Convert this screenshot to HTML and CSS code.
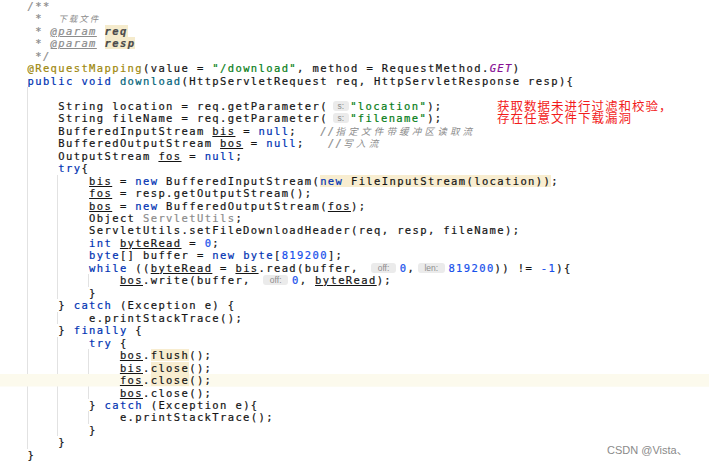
FILE: index.html
```html
<!DOCTYPE html>
<html lang="zh">
<head>
<meta charset="utf-8">
<title>download</title>
<link rel="stylesheet" href="styles.css">
</head>
<body>
<div class="page">
  <div class="editor">
    <div class="line c">/**</div>
    <div class="line c"> *  <span class="cjk-doc">下载文件</span></div>
    <div class="line c"> * <span class="dt">@param</span> <span class="dp">req</span></div>
    <div class="line c"> * <span class="dt">@param</span> <span class="dp">resp</span></div>
    <div class="line c"> */</div>
    <div class="line"><span class="a">@RequestMapping</span>(value = <span class="s">"/download"</span>, method = RequestMethod.<span class="sf">GET</span>)</div>
    <div class="line"><span class="k">public void</span> <span class="m">download</span>(HttpServletRequest req, HttpServletResponse resp){</div>
    <div class="blk">
      <div class="line"></div>
      <div class="line">String location = req.getParameter(<span class="h h-s">s:</span><span class="s">"location"</span>);</div>
      <div class="line">String fileName = req.getParameter(<span class="h h-s">s:</span><span class="s">"filename"</span>);</div>
      <div class="line">BufferedInputStream <span class="v">bis</span> = <span class="k">null</span>;   <span class="c">//<span class="cjk">指定文件带缓冲区读取流</span></span></div>
      <div class="line">BufferedOutputStream <span class="v">bos</span> = <span class="k">null</span>;   <span class="c">//<span class="cjk">写入流</span></span></div>
      <div class="line">OutputStream <span class="v">fos</span> = <span class="k">null</span>;</div>
      <div class="line"><span class="k">try</span>{</div>
      <div class="blk">
        <div class="line"><span class="v">bis</span> = <span class="k">new</span> BufferedInputStream(<span class="hl"><span class="k">new</span> FileInputStream(location))</span>;</div>
        <div class="line"><span class="v">fos</span> = resp.getOutputStream();</div>
        <div class="line"><span class="v">bos</span> = <span class="k">new</span> BufferedOutputStream(<span class="v">fos</span>);</div>
        <div class="line">Object <span class="u">ServletUtils</span>;</div>
        <div class="line">ServletUtils.setFileDownloadHeader(req, resp, fileName);</div>
        <div class="line"><span class="k">int</span> <span class="v">byteRead</span> = <span class="n">0</span>;</div>
        <div class="line"><span class="k">byte</span>[] buffer = <span class="k">new byte</span>[<span class="n">819200</span>];</div>
        <div class="line"><span class="k">while</span> ((<span class="v">byteRead</span> = <span class="v">bis</span>.read(buffer, <span class="h h-off">off:</span><span class="n">0</span>, <span class="h h-len">len:</span><span class="n">819200</span>)) != <span class="n">-1</span>){</div>
        <div class="blk">
          <div class="line"><span class="v">bos</span>.write(buffer, <span class="h h-off">off:</span><span class="n">0</span>, <span class="v">byteRead</span>);</div>
        </div>
        <div class="line">}</div>
      </div>
      <div class="line">} <span class="k">catch</span> (Exception e) {</div>
      <div class="blk">
        <div class="line">e.printStackTrace();</div>
      </div>
      <div class="line">} <span class="k">finally</span> {</div>
      <div class="blk">
        <div class="line"><span class="k">try</span> {</div>
        <div class="blk">
          <div class="line"><span class="v">bos</span>.<span class="hl">flush</span>();</div>
          <div class="line"><span class="v">bis</span>.<span class="hl">close</span>();</div>
          <div class="line cur"><span class="v">fos</span>.<span class="hl">close</span>();</div>
          <div class="line"><span class="v">bos</span>.close();</div>
        </div>
        <div class="line">} <span class="k">catch</span> (Exception e){</div>
        <div class="blk">
          <div class="line">e.printStackTrace();</div>
        </div>
        <div class="line">}</div>
      </div>
      <div class="line">}</div>
    </div>
    <div class="line">}</div>
  </div>

  <div class="note">获取数据未进行过滤和校验，<br>存在任意文件下载漏洞</div>

  <div class="mark">CSDN @Vista、</div>
</div>
</body>
</html>
```

FILE: styles.css
```css
html, body {
  margin: 0;
  padding: 0;
  background: #ffffff;
}

body {
  overflow: hidden;
}

.page {
  position: relative;
  width: 709px;
  height: 467px;
  overflow: hidden;
}

.editor {
  padding-left: 27.5px;
  font-family: "DejaVu Sans Mono", "Liberation Mono", monospace;
  font-size: 10.5px;
  letter-spacing: 1.38px;
  color: #151515;
  -webkit-text-stroke: 0.2px currentColor;
}

.line {
  height: 12.47px;
  line-height: 12.47px;
  white-space: pre;
}

.blk {
  margin-left: -1px;
  border-left: 1px solid #e2e2e2;
  padding-left: 30.8px;
}

.k { color: #0033b3; }
.s { color: #067d17; }
.n { color: #1750eb; }
.c { color: #8c8c8c; font-style: italic; }
.a { color: #9e880d; }
.m { color: #00627a; }
.sf { color: #871094; font-style: italic; }
.u { color: #8c8c8c; }

.dt {
  text-decoration: underline;
}

.dp {
  color: #4a4a4a;
  font-weight: bold;
  background: #f5ebcc;
}

.v {
  text-decoration: underline;
  text-underline-offset: 1px;
}

.hl {
  background: #f8edd0;
}

.cur {
  background: #fcfaed;
  box-shadow: 0 0 0 100vmax #fcfaed;
  clip-path: inset(0 -100vmax);
}

.h {
  display: inline-block;
  box-sizing: border-box;
  height: 10px;
  line-height: 10px;
  margin-top: 1px;
  vertical-align: top;
  font-family: "Liberation Sans", "DejaVu Sans", sans-serif;
  font-size: 8.5px;
  font-style: normal;
  letter-spacing: 0;
  -webkit-text-stroke: 0;
  color: #8e8e8e;
  background: #ebebeb;
  border-radius: 3px;
  text-align: center;
}

.h-s { width: 16.7px; margin-left: 4.7px; margin-right: 0.9px; }
.h-off { width: 25.5px; margin-left: 4.4px; margin-right: 3.5px; }
.h-len { width: 27.7px; margin-left: -5.4px; margin-right: 3.2px; }

.cjk {
  font-family: "Noto Sans CJK SC", sans-serif;
  font-size: 9.5px;
  letter-spacing: 3.2px;
  -webkit-text-stroke: 0;
}

.cjk-doc {
  font-family: "Noto Sans CJK SC", sans-serif;
  font-size: 8.5px;
  letter-spacing: 2px;
  -webkit-text-stroke: 0;
}

.note {
  position: absolute;
  left: 497px;
  top: 99.5px;
  font-family: "Noto Sans CJK SC", sans-serif;
  font-size: 12.5px;
  line-height: 12.5px;
  letter-spacing: 1px;
  color: #f21c1c;
  white-space: nowrap;
}

.mark {
  position: absolute;
  left: 607px;
  top: 444px;
  font-family: "Liberation Sans", "Noto Sans CJK SC", sans-serif;
  font-size: 11px;
  line-height: 13px;
  color: #8a8a8a;
  white-space: nowrap;
}
```
